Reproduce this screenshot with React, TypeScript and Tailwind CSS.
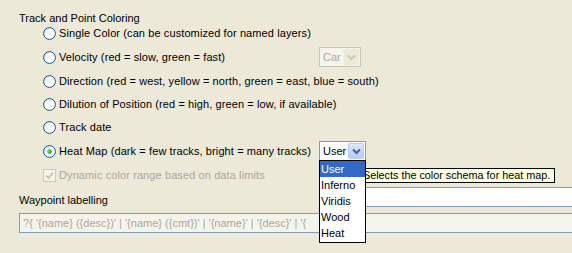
import React from "react";

const font = { fontFamily: '"Liberation Sans", Arial, sans-serif' };

function Radio({ checked }: { checked?: boolean }) {
  return (
    <svg width="13" height="13" viewBox="0 0 13 13" className="shrink-0">
      <defs>
        <linearGradient id="rg" x1="0" y1="0" x2="1" y2="1">
          <stop offset="0" stopColor="#d8d8d0" />
          <stop offset="0.45" stopColor="#fbfbf9" />
          <stop offset="1" stopColor="#ffffff" />
        </linearGradient>
        <radialGradient id="dot" cx="0.4" cy="0.4" r="0.6">
          <stop offset="0" stopColor="#6ee36e" />
          <stop offset="1" stopColor="#1a9a1a" />
        </radialGradient>
      </defs>
      <circle cx="6.5" cy="6.5" r="5.9" fill="url(#rg)" stroke="#1c5180" strokeWidth="1" />
      {checked && <circle cx="6.5" cy="6.5" r="2.2" fill="url(#dot)" />}
    </svg>
  );
}

function RadioRow({ label, checked, h, children }: { label: string; checked?: boolean; h: string; children?: React.ReactNode }) {
  return (
    <div className={`flex items-center ${h}`}>
      <div className="flex w-[276px] shrink-0 items-center gap-[3px]">
        <Radio checked={checked} />
        <span className="whitespace-nowrap tracking-[0.1px] text-black">{label}</span>
      </div>
      {children}
    </div>
  );
}

function Chevron({ color }: { color: string }) {
  return (
    <svg width="9" height="7" viewBox="0 0 9 7">
      <path d="M1 1.5 L4.5 5 L8 1.5" fill="none" stroke={color} strokeWidth="2" />
    </svg>
  );
}

export default function App() {
  return (
    <div
      className="relative h-[253px] w-[572px] overflow-hidden bg-[#ece9d8] text-[11px] leading-[13px]"
      style={font}
    >
      <div className="flex h-[13px] items-center pl-[19px] pt-[18px]">
        <span className="text-black">Track and Point Coloring</span>
      </div>
      <div className="mt-[3px] flex flex-col pl-[43px]">
        <RadioRow h="h-[24px]" label="Single Color (can be customized for named layers)" />
        <RadioRow h="h-[24px]" label="Velocity (red = slow, green = fast)">
          <div className="flex h-[20px] w-[42px] items-center border border-[#c9c7ba] bg-[#f5f4ea]">
            <span className="flex-1 pl-[3px] text-[#aca899]">Car</span>
            <div className="mr-px flex h-[16px] w-[15px] items-center justify-center bg-[#ece9d8]">
              <Chevron color="#c9c7ba" />
            </div>
          </div>
        </RadioRow>
        <RadioRow h="h-[24px]" label="Direction (red = west, yellow = north, green = east, blue = south)" />
        <RadioRow h="h-[23px]" label="Dilution of Position (red = high, green = low, if available)" />
        <RadioRow h="h-[23px]" label="Track date" />
        <RadioRow h="h-[24px]" checked label="Heat Map (dark = few tracks, bright = many tracks)">
          <div className="relative flex h-[20px] w-[47px] items-center border border-[#7f9db9] bg-white">
            <span className="flex-1 pl-[3px] text-black">User</span>
            <div className="mr-px flex h-[16px] w-[16px] items-center justify-center rounded-[2px] border border-[#b9cbf3] bg-gradient-to-b from-[#dce8fd] to-[#b6cbf6]">
              <Chevron color="#4d6185" />
            </div>
          </div>
        </RadioRow>
        <div className="flex h-[24px] items-center gap-[3px]">
          <div className="flex h-[13px] w-[13px] shrink-0 items-center justify-center border border-[#cac8bb] bg-[#f5f4ea]">
            <svg width="9" height="9" viewBox="0 0 9 9">
              <path d="M1 4.5 L3.5 7 L8 1.5" fill="none" stroke="#cac8bb" strokeWidth="2" />
            </svg>
          </div>
          <span className="whitespace-nowrap tracking-[0.1px] text-[#aca899]">Dynamic color range based on data limits</span>
        </div>
      </div>
      <div className="flex h-[20px] items-end">
        <span className="pl-[19px] text-black">Waypoint labelling</span>
        <div className="ml-auto h-[20px] w-[206px] border-y border-[#7f9db9] bg-white" />
      </div>
      <div className="ml-[19px] mt-[6px] flex h-[20px] w-[600px] items-center border border-[#7f9db9] bg-[#f5f4ea] pl-[3px]">
        <div className="w-[296px] overflow-hidden">
          <span className="whitespace-nowrap text-[#aca899]">
            ?{"{"} '{"{"}name{"}"} ({"{"}desc{"}"})' | '{"{"}name{"}"} ({"{"}cmt{"}"})' | '{"{"}name{"}"}' | '{"{"}desc{"}"}' | '{"{"}
          </span>
        </div>
      </div>

      {/* tooltip */}
      <div className="absolute left-[359px] top-[168px] flex h-[15px] w-[196px] items-center border border-black bg-[#ffffe1] pl-[3px]">
        <span className="whitespace-nowrap text-[10.8px] text-black">Selects the color schema for heat map.</span>
      </div>

      {/* dropdown list */}
      <div className="absolute left-[319px] top-[160px] flex w-[47px] flex-col border border-black bg-white pb-px">
        {["User", "Inferno", "Viridis", "Wood", "Heat"].map((o, i) => (
          <div
            key={o}
            className={`flex h-[16px] items-center pl-px ${i === 0 ? "bg-[#316ac5] text-white" : "text-black"}`}
          >
            {o}
          </div>
        ))}
      </div>
    </div>
  );
}
